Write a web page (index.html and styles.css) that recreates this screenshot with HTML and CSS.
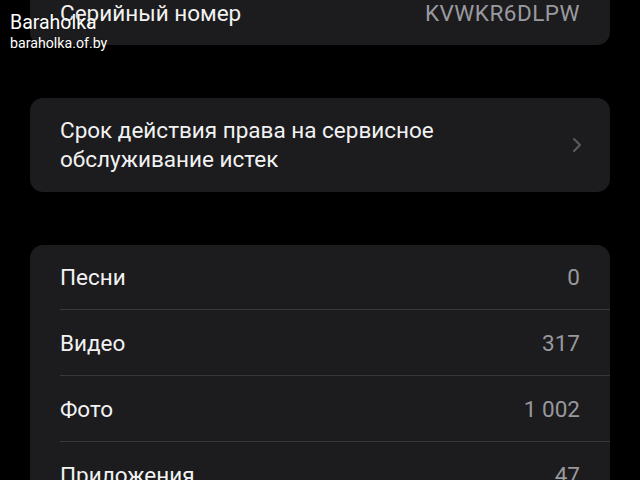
FILE: index.html
```html
<!DOCTYPE html>
<html lang="ru">
<head>
    <meta charset="UTF-8">
    <meta name="viewport" content="width=device-width, initial-scale=1.0">
    <title>Об этом устройстве</title>
    <link rel="stylesheet" href="styles.css">
</head>
<body>

    <div class="watermark">
        <div class="wm-title">Baraholka</div>
        <div class="wm-site">baraholka.of.by</div>
    </div>

    <div class="page">
        <div class="card card-first">
            <div class="row">
                <span class="label">Серийный номер</span>
                <span class="value serial">KVWKR6DLPW</span>
            </div>
        </div>

        <div class="card">
            <div class="row row-link">
                <span class="label">Срок действия права на сервисное<br>обслуживание истек</span>
                <svg class="chevron" width="10" height="16" viewBox="0 0 10 16">
                    <path d="M2 2 L8 8 L2 14" fill="none" stroke="#5b5b60" stroke-width="2" stroke-linecap="round" stroke-linejoin="round"/>
                </svg>
            </div>
        </div>

        <div class="card">
            <div class="row">
                <span class="label">Песни</span>
                <span class="value">0</span>
            </div>
            <div class="row">
                <span class="label">Видео</span>
                <span class="value">317</span>
            </div>
            <div class="row">
                <span class="label">Фото</span>
                <span class="value">1 002</span>
            </div>
            <div class="row">
                <span class="label">Приложения</span>
                <span class="value">47</span>
            </div>
        </div>
    </div>

</body>
</html>
```

FILE: styles.css
```css
/* общий фон */
body {
    margin: 0;
    background: #000;
    color: #fff;
    font-family: Roboto, "Liberation Sans", sans-serif;
    overflow: hidden;
}
.page {
    display: flex;
    flex-direction: column;
    gap: 53px;
    padding: 0 30px;
}
.card {
    background: #1c1c1e;
    border-radius: 13px;
    overflow: hidden;
}
.card-first {
    margin-top: -19px;
}
.row {
    display: flex;
    align-items: center;
    justify-content: space-between;
    height: 64px;
    padding: 0 30px;
    position: relative;
    font-size: 22.5px;
}
.row + .row {
    border-top: 1px solid #38383a;
    margin-left: 30px;
    padding-left: 0;
    height: 65px;
}
.row-link {
    height: auto;
    padding-top: 18px;
    padding-bottom: 18px;
    line-height: 29px;
}
.label {
    color: #f2f2f2;
}
.value {
    color: #98989d;
}
.serial {
    color: #9a9a9e;
    letter-spacing: 0.5px;
}
.chevron {
    margin-right: -2px;
}
/* водяной знак */
.watermark {
    position: absolute;
    left: 10px;
    top: 11px;
    z-index: 2;
    color: #fff;
    text-shadow: 0 0 2px rgba(0, 0, 0, 0.6);
    font-family: Roboto, "Liberation Sans", sans-serif;
}
.wm-title {
    font-size: 19.5px;
    line-height: 23px;
}
.wm-site {
    font-size: 14.2px;
    line-height: 18px;
}
```
